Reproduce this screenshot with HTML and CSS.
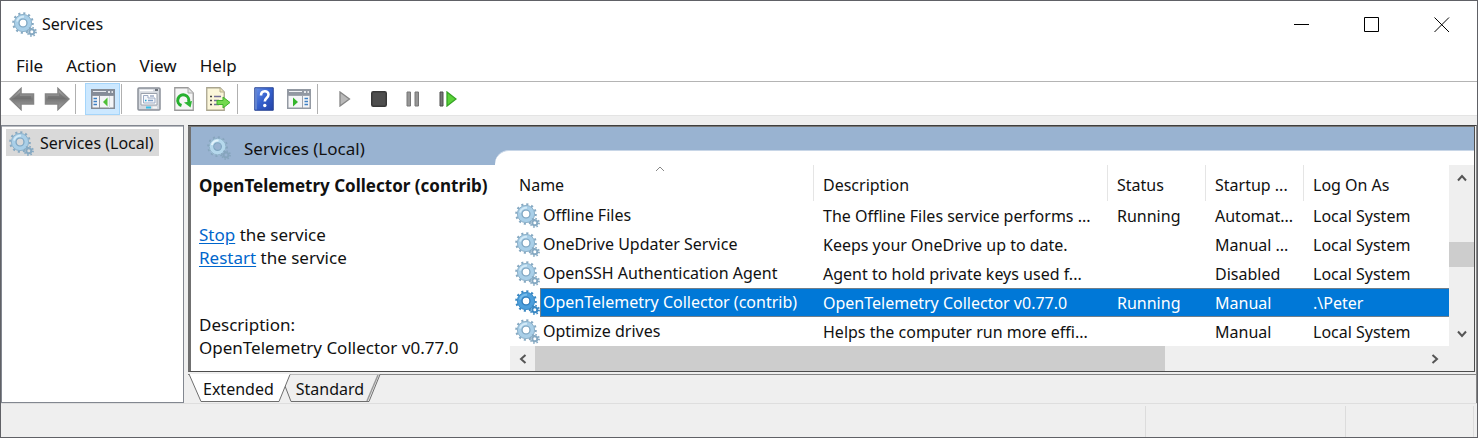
FILE: index.html
```html
<!DOCTYPE html>
<html lang="en">
<head>
<meta charset="utf-8">
<title>Services</title>
<link rel="stylesheet" href="styles.css">
</head>
<body>
<svg class="defs" aria-hidden="true">
  <defs>
    <linearGradient id="metal" x1="0" y1="0" x2="0" y2="1"><stop offset="0" stop-color="#b5b5b5"/><stop offset=".5" stop-color="#777"/><stop offset="1" stop-color="#a5a5a5"/></linearGradient>
    <linearGradient id="navy" x1="0" y1="0" x2="1" y2="1"><stop offset="0" stop-color="#6b93ea"/><stop offset=".5" stop-color="#3560cc"/><stop offset="1" stop-color="#2443a8"/></linearGradient>
    <symbol id="gear" viewBox="0 0 25 25">
      <circle class="teeth" cx="11" cy="11" r="9.6" fill="none" stroke-width="2.4" stroke-dasharray="2.1 2.926"/>
      <circle class="body" cx="11" cy="11" r="6.3" fill="none" stroke-width="5.4"/>
      <circle class="edge" cx="11" cy="11" r="8.6" fill="none" stroke-width=".8"/>
      <circle class="rim" cx="11" cy="11" r="4" fill="none" stroke-width="1.2"/>
      <path class="shine" d="M5 9.500A6.500 6.500 0 0 1 12 4.700" fill="none" stroke-width="2"/>
      <circle class="small" cx="19.800" cy="19.800" r="4.200" fill="none" stroke-width="1.800" stroke-dasharray="1.500 1.799"/>
      <circle class="small" cx="19.800" cy="19.800" r="2.500" fill="none" stroke-width="2"/>
    </symbol>
  </defs>
</svg>
<div class="window">
  <header class="titlebar">
    <svg class="gear"><use href="#gear"/></svg>
    <h1>Services</h1>
    <div class="controls">
      <button aria-label="Minimize"><svg width="16" height="16"><path d="M0 7.500H15" stroke="#000"/></svg></button>
      <button aria-label="Maximize"><svg width="16" height="16"><path d="M.5.5H14.500V14.500H.5Z" fill="none" stroke="#000"/></svg></button>
      <button aria-label="Close"><svg width="16" height="16"><path d="M.5.5 15 15M15 .5.5 15" stroke="#000"/></svg></button>
    </div>
  </header>

  <nav class="menubar">
    <button>File</button><button>Action</button><button>View</button><button>Help</button>
  </nav>

  <div class="toolbar" role="toolbar">
    <button aria-label="Back"><svg width="26" height="24"><path d="M1 12 12 1.500V7H24.500V17H12V22.500Z" fill="url(#metal)" stroke="#858585" stroke-width="1.500"/><path d="M4 12 11 5.500V9H22V12Z" fill="#666" opacity=".45"/></svg></button>
    <button aria-label="Forward"><svg width="26" height="24"><path d="M25 12 14 1.500V7H1.500V17H14V22.500Z" fill="url(#metal)" stroke="#858585" stroke-width="1.500"/><path d="M22 12 15 5.500V9H4V12Z" fill="#666" opacity=".45"/></svg></button>
    <i class="sep"></i>
    <button class="active" aria-label="Show console tree"><svg width="24" height="20"><path d="M.75.75H23.250V19.250H.75Z" fill="#f4f5f7" stroke="#858b94" stroke-width="1.500"/><path d="M1 1H23V6H1Z" fill="#858c98"/><path d="M2 2.500H15" stroke="#e5e8ed"/><path d="M17 3H19M20.500 3H22" stroke="#fff" stroke-width="1.500"/><path d="M1 6.500H23M8.500 7V19" stroke="#8f959f"/><path d="M2.500 9.500H6M2.500 12.500H6M2.500 15.500H6" stroke="#3d80c4" stroke-width="1.500"/><path d="M12 13 16.500 8.500V17.500Z" fill="#4fbf36"/><path d="M18.500 7V19" stroke="#d7dce4"/></svg></button>
    <i class="sep"></i>
    <button aria-label="Properties"><svg width="24" height="24"><rect x="1" y="1" width="22" height="22" rx="1" fill="#d5d9df" stroke="#8b9099" stroke-width="1.500"/><path d="M3 3.500H16" stroke="#fff" stroke-width="1.500"/><path d="M18 3H21" stroke="#6d737c" stroke-width="2"/><path d="M4 6.500H20V18H4Z" fill="#fff" stroke="#9ba2ad"/><path d="M6.500 8.500H11V11H18V16H6.500Z" fill="#f4f6fa" stroke="#9cabc4"/><path d="M13 9H17" stroke="#9cabc4" stroke-width="1.500"/><path d="M8 13.500H9.500" stroke="#1aa7d8" stroke-width="1.500"/><path d="M11 13.500H16" stroke="#7f9fc8" stroke-width="1.500"/><path d="M9 20.500H14" stroke="#36bde6" stroke-width="2"/><path d="M15.500 20.500H20" stroke="#f7f7f7" stroke-width="2"/></svg></button>
    <button aria-label="Refresh"><svg width="20" height="24"><path d="M.75.75H14L19.250 6V23.250H.75Z" fill="#f5f5f5" stroke="#9b9b9b" stroke-width="1.300"/><path d="M14 1V6H19" fill="#e4e4e4" stroke="#aaa"/><path d="M7.500 18.500A5.500 5.500 0 1 1 14.500 15" fill="none" stroke="#26b02e" stroke-width="3"/><path d="M10 15.500 18 14 16.500 20.500Z" fill="#2cb534"/></svg></button>
    <button aria-label="Export list"><svg width="25" height="24"><path d="M.75.75H14L18.250 5V23.250H.75Z" fill="#fbf6d9" stroke="#aaa58f" stroke-width="1.300"/><path d="M14 1V5H18" fill="#eee5b8" stroke="#b6ae8c"/><path d="M4 9.500H6M4 13.500H6M4 17.500H6" stroke="#444" stroke-width="1.600"/><path d="M8 9.500H15M8 13.500H13M8 17.500H13" stroke="#756f98" stroke-width="1.500"/><path d="M11 13.500H17V10L24 15.500 17 21V17.500H11Z" fill="#73d94e" stroke="#41b22c"/></svg></button>
    <i class="sep"></i>
    <button class="narrow" aria-label="Help"><svg width="20" height="24"><path d="M.75.75H19.250V23.250H.75Z" fill="url(#navy)" stroke="#284494"/><path d="M2 1.500V22.500" stroke="#6283cf" stroke-width="2"/><path d="M7 8.500C7 3 14.500 3 14.500 7.500 14.500 11 10.800 11 10.800 14.500" fill="none" stroke="#fff" stroke-width="2.600"/><circle cx="10.800" cy="18.500" r="1.700" fill="#fff"/></svg></button>
    <button aria-label="Show action pane"><svg width="24" height="20"><path d="M.75.75H23.250V19.250H.75Z" fill="#f4f5f7" stroke="#949aa3" stroke-width="1.500"/><path d="M1 1H23V6H1Z" fill="#9298a2"/><path d="M2 2.500H15" stroke="#f0f1f4"/><path d="M17 3H19M20.500 3H22" stroke="#fff" stroke-width="1.500"/><path d="M1 6.500H23M15.500 7V19" stroke="#a0a5ae"/><path d="M17.500 9.500H21M17.500 12.500H21M17.500 15.500H21" stroke="#3d80c4" stroke-width="1.500"/><path d="M6 8.500 11 13 6 17.500Z" fill="#35b52c"/></svg></button>
    <i class="sep"></i>
    <button aria-label="Start service"><svg width="12" height="16"><path d="M1 1 10.500 8 1 15Z" fill="#b9b9b9" stroke="#858585" stroke-width="1.300"/></svg></button>
    <button class="narrow" aria-label="Stop service"><svg width="16" height="16"><rect x=".75" y=".75" width="14.500" height="14.500" rx="1.500" fill="#4e4e4e" stroke="#383838" stroke-width="1.500"/></svg></button>
    <button class="narrow" aria-label="Pause service"><svg width="14" height="16"><path d="M1 1H4.500V15H1ZM9 1H12.500V15H9Z" fill="#969696" stroke="#777"/></svg></button>
    <button aria-label="Restart service"><svg width="18" height="16"><path d="M1 1H4V15H1Z" fill="#777" stroke="#4d4d4d"/><path d="M8 1 17 8 8 15Z" fill="#5ad238" stroke="#35a324" stroke-width="1.300"/></svg></button>
  </div>

  <main class="main">
    <aside class="tree">
      <button class="node"><svg class="gear"><use href="#gear"/></svg>Services (Local)</button>
    </aside>

    <section class="result">
      <div class="pane">
        <div class="info">
          <div class="caption"><svg class="gear faded"><use href="#gear"/></svg>Services (Local)</div>
          <div class="details">
            <h2>OpenTelemetry Collector (contrib)</h2>
            <p><a href="#">Stop</a> the service<br><a href="#">Restart</a> the service</p>
            <p class="description">Description:<br>OpenTelemetry Collector v0.77.0</p>
          </div>
        </div>
        <div class="listwrap">
          <div class="list">
            <div class="tablebox">
              <table>
                <colgroup><col class="c-name"><col class="c-desc"><col class="c-mid"><col class="c-mid"><col></colgroup>
                <thead><tr><th><svg class="sort" width="10" height="6"><path d="M1 5 5 1 9 5" fill="none" stroke="#888"/></svg>Name</th><th>Description</th><th>Status</th><th>Startup ...</th><th>Log On As</th></tr></thead>
                <tbody>
                  <tr><td><span class="svc"><svg class="gear"><use href="#gear"/></svg>Offline Files</span></td><td>The Offline Files service performs ...</td><td>Running</td><td>Automat...</td><td>Local System</td></tr>
                  <tr><td><span class="svc"><svg class="gear"><use href="#gear"/></svg>OneDrive Updater Service</span></td><td>Keeps your OneDrive up to date.</td><td></td><td>Manual ...</td><td>Local System</td></tr>
                  <tr><td><span class="svc"><svg class="gear"><use href="#gear"/></svg>OpenSSH Authentication Agent</span></td><td>Agent to hold private keys used f...</td><td></td><td>Disabled</td><td>Local System</td></tr>
                  <tr class="selected"><td><span class="svc"><svg class="gear"><use href="#gear"/></svg>OpenTelemetry Collector (contrib)</span></td><td>OpenTelemetry Collector v0.77.0</td><td>Running</td><td>Manual</td><td>.\Peter</td></tr>
                  <tr><td><span class="svc"><svg class="gear"><use href="#gear"/></svg>Optimize drives</span></td><td>Helps the computer run more effi...</td><td></td><td>Manual</td><td>Local System</td></tr>
                </tbody>
              </table>
            </div>
            <div class="vbar">
              <button aria-label="Scroll up"><svg width="10" height="8"><path d="M1 6.500 5 2 9 6.500" fill="none" stroke="#555" stroke-width="2"/></svg></button>
              <div class="vtrack"><div class="vthumb"></div></div>
              <button aria-label="Scroll down"><svg width="10" height="8"><path d="M1 1.500 5 6 9 1.500" fill="none" stroke="#555" stroke-width="2"/></svg></button>
            </div>
            <div class="hbar">
              <button aria-label="Scroll left"><svg width="8" height="10"><path d="M6.500 1 2 5 6.500 9" fill="none" stroke="#555" stroke-width="2"/></svg></button>
              <div class="htrack"><div class="hthumb"></div></div>
              <button aria-label="Scroll right"><svg width="8" height="10"><path d="M1.500 1 6 5 1.500 9" fill="none" stroke="#555" stroke-width="2"/></svg></button>
            </div>
          </div>
        </div>
      </div>
      <div class="tabs">
        <svg class="tabshape" width="200" height="29" aria-hidden="true">
          <path d="M97 12 103 27.500H181L192 .5H102Z" fill="#efefef"/>
          <path d="M97 12 103 27.500H181L192 .5" fill="none" stroke="#6e6e6e"/>
          <path d="M179 27 190 1" stroke="#999" stroke-width="1.500"/>
          <path d="M1 0 13 27.500H91L102 .5V0Z" fill="#fff"/>
          <path d="M1 0 13 27.500H91L102 .5" fill="none" stroke="#6e6e6e"/>
        </svg>
        <button>Extended</button><button>Standard</button>
      </div>
    </section>
  </main>

  <footer class="statusbar"><span></span><span></span><span></span></footer>
</div>
</body>
</html>
```
FILE: styles.css
```css
* { box-sizing: border-box; }

body {
  margin: 0;
  background: #efefef;
  color: #111;
  font-family: "Noto Sans", "Open Sans", sans-serif;
  font-size: 16px;
  line-height: 23px;
}

button {
  margin: 0;
  padding: 0;
  border: 0;
  background: none;
  color: inherit;
  font: inherit;
}

h1, h2, p { margin: 0; }
svg { display: block; flex: none; }
.defs { position: absolute; width: 0; height: 0; }

.gear {
  --teeth: #86a9c2;
  --body: #a9cfe8;
  --rim: #7fa5c0;
  --shine: #d3eaf7;
  width: 25px;
  height: 25px;
}
.teeth, .edge, .small { stroke: var(--teeth); }
.body { stroke: var(--body); }
.rim { stroke: var(--rim); }
.shine { stroke: var(--shine); }
.faded { --body: #b5d8ec; --teeth: #86a5bd; --shine: #e2f3fb; }

.window {
  display: flex;
  flex-direction: column;
  min-height: 100vh;
  border: 1px solid #606166;
}

.titlebar {
  display: flex;
  align-items: center;
  height: 47px;
  padding-left: 11px;
  background: #fff;
}
.titlebar h1 {
  flex: 1;
  padding-left: 5px;
  font-size: 16px;
  font-weight: 400;
}
.controls { display: flex; }
.controls button {
  display: grid;
  place-items: center;
  width: 70px;
  height: 46px;
}

.menubar {
  display: flex;
  gap: 23px;
  height: 34px;
  padding: 2px 15px 0;
  border-bottom: 1px solid #b4b4b4;
  background: #fff;
  font-size: 17px;
}

.toolbar {
  display: flex;
  align-items: center;
  height: 34px;
  padding: 1px 3px 0;
  border-bottom: 1px solid #e4e4e4;
  background: #fff;
}
.toolbar button {
  display: grid;
  place-items: center;
  width: 35px;
  height: 32px;
}
.toolbar .narrow { width: 34px; }
.toolbar .active { border: 1px solid #a5d5fa; background: #cce8ff; }
.sep {
  width: 1px;
  height: 30px;
  margin: 0 9px 0 1px;
  background: #b0b0b0;
}

.main {
  display: flex;
  flex: 1;
  gap: 4px;
  padding-top: 9px;
}

.tree {
  width: 183px;
  padding: 3px 3px 3px 4px;
  border: 1px solid #828790;
  box-shadow: inset 0 1px #b8bbc0;
  background: #fff;
}
.node {
  display: flex;
  align-items: center;
  gap: 6px;
  height: 27px;
  padding: 1px 5px 0 3px;
  background: #d9d9d9;
}

.result {
  display: flex;
  flex: 1;
  flex-direction: column;
  min-width: 0;
  border-top: 1px solid #3f3f3f;
  border-right: 1px solid #858585;
}
.pane {
  display: flex;
  flex: 1;
  margin-right: 1px;
  border: 1px solid #4d4d4d;
  border-top-color: #777;
  border-left: 3px solid #707070;
  background: #99b3d1;
}

.info {
  display: flex;
  flex-direction: column;
  width: 304px;
  font-size: 17px;
}
.caption {
  display: flex;
  align-items: center;
  gap: 13px;
  height: 38px;
  padding: 4px 0 0 16px;
}
.caption .gear { width: 24px; height: 24px; }
.details {
  display: flex;
  flex: 1;
  flex-direction: column;
  padding: 9px 0 12px 8px;
  background: #fff;
}
.details h2 {
  margin-bottom: 26px;
  font-size: 17px;
  font-weight: 700;
  line-height: 23px;
  white-space: nowrap;
}
.details a { color: #0066cc; text-underline-offset: 2px; }
.description { margin-top: auto; white-space: nowrap; }

.listwrap {
  display: flex;
  flex: 1;
  min-width: 0;
  padding-top: 23px;
}
.list {
  display: grid;
  flex: 1;
  grid-template-columns: 1fr 25px;
  grid-template-rows: 1fr 25px;
  min-width: 0;
  padding: 14px 0 0 15px;
  border-top: 1px solid #c8d6e7;
  border-top-left-radius: 14px;
  background: #fff;
}

.tablebox { min-width: 0; }
table {
  width: 100%;
  height: 181px;
  border-collapse: separate;
  border-spacing: 0;
  table-layout: fixed;
}
.c-name { width: 304px; }
.c-desc { width: 294px; }
.c-mid { width: 98px; }
th, td {
  overflow: hidden;
  padding: 0 0 0 9px;
  text-align: left;
  font-weight: 400;
  white-space: nowrap;
}
th {
  position: relative;
  height: 36px;
  padding-top: 4px;
  border-right: 1px solid #e5e5e5;
}
td { padding-top: 1px; }
th:last-child { border-right: 0; }
.sort { position: absolute; top: 1px; left: 48%; }
td:first-child { padding-top: 0; padding-left: 5px; }
.svc { display: flex; align-items: center; gap: 3px; }

.selected td {
  background: #0078d7;
  box-shadow: inset 0 1px #6f7f8c, inset 0 -1px #6f7f8c;
  color: #fff;
}
.selected td:first-child {
  background:
    linear-gradient(#0078d7, #0078d7) 31px 1px / 100% calc(100% - 2px) no-repeat,
    linear-gradient(#6f7f8c, #6f7f8c) 30px 0 no-repeat;
  box-shadow: none;
}
.selected .gear {
  --teeth: #3987c2;
  --body: #4c9fdc;
  --rim: #2f7ab8;
  --shine: #77bbea;
}

.vbar { display: flex; flex-direction: column; background: #efefef; }
.vbar button, .hbar button { display: grid; place-items: center; width: 25px; height: 25px; }
.vtrack { flex: 1; padding-top: 52px; }
.vthumb { height: 25px; background: #cdcdcd; }
.hbar { display: flex; grid-column: 1 / 3; padding-right: 27px; background: #efefef; }
.htrack { flex: 1; }
.hthumb { width: 71%; height: 100%; background: #cdcdcd; }

.tabs {
  position: relative;
  display: flex;
  gap: 22px;
  height: 29px;
  margin-top: 2px;
  padding: 3px 0 0 15px;
  border-top: 1px solid #858585;
}
.tabs button { position: relative; height: 23px; }
.tabshape { position: absolute; top: -1px; left: 0; }

.statusbar {
  display: flex;
  justify-content: flex-end;
  height: 34px;
  padding-right: 3px;
  border-top: 1px solid #dedede;
}
.statusbar span {
  width: 128px;
  margin-top: 2px;
  border-right: 1px solid #dcdcdc;
}
.statusbar span:nth-child(2) { width: 200px; }
```
